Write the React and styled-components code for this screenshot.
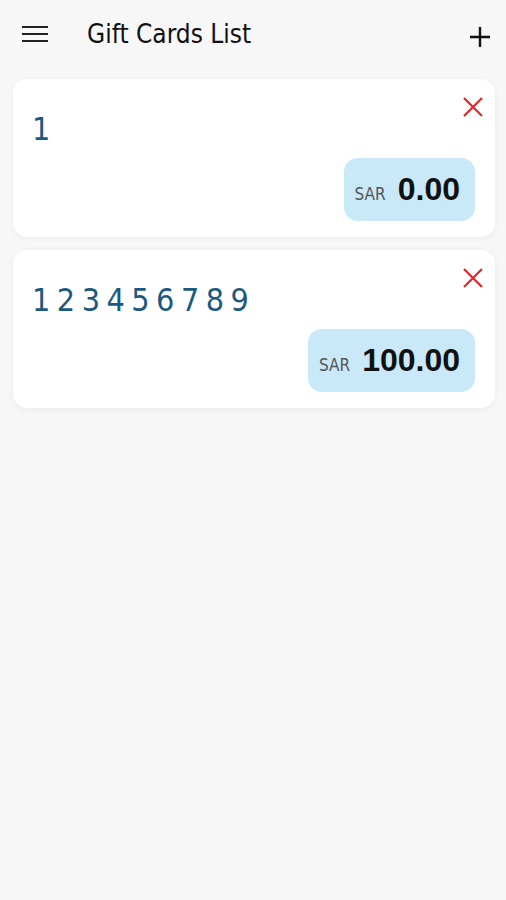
import React from 'react';
import styled, { createGlobalStyle } from 'styled-components';

const GlobalStyle = createGlobalStyle`
    html, body {
        margin: 0;
        padding: 0;
        background: #f7f7f7;
    }
    body {
        font-family: "DejaVu Sans Condensed", "DejaVu Sans", sans-serif;
    }
`;

const Page = styled.div`
    min-height: 900px;
    background: #f7f7f7;
`;

const Header = styled.div`
    height: 68px;
    display: flex;
    align-items: center;
    padding: 0 15px 0 22px;
`;

const MenuButton = styled.div`
    width: 26px;
    display: flex;
    flex-direction: column;
    gap: 5px;
    margin-right: 39px;

    span {
        display: block;
        height: 2px;
        background: #222;
    }
`;

const Title = styled.div`
    flex: 1;
    font-size: 26px;
    line-height: 30px;
    color: #111;
`;

const AddButton = styled.svg`
    width: 22px;
    height: 22px;
    margin-top: 6px;
`;

const List = styled.div`
    display: flex;
    flex-direction: column;
    gap: 13px;
    padding: 11px 11px 0 13px;
`;

const Card = styled.div`
    position: relative;
    background: #fff;
    border-radius: 14px;
    box-shadow: 0 1px 6px rgba(0, 0, 0, 0.06);
    padding: 31px 20px 16px 19px;
    display: flex;
    flex-direction: column;
    gap: 10px;
`;

const RemoveButton = styled.svg`
    position: absolute;
    top: 17px;
    right: 11px;
    width: 22px;
    height: 22px;
`;

const CardNumber = styled.div`
    font-size: 32px;
    line-height: 38px;
    letter-spacing: 6.5px;
    color: #1b5a80;
`;

const AmountRow = styled.div`
    display: flex;
    justify-content: flex-end;
`;

const Pill = styled.div`
    height: 63px;
    display: flex;
    align-items: baseline;
    justify-content: center;
    padding: 0 15px 0 11px;
    box-sizing: border-box;
    line-height: 63px;
    background: #c9e9f9;
    border-radius: 14px;
`;

const Currency = styled.span`
    font-size: 17px;
    color: #555;
    margin-right: 12px;
`;

const Amount = styled.span`
    font-family: "Liberation Sans", Arial, sans-serif;
    font-weight: 700;
    font-size: 32px;
    color: #111;
`;

const cards = [
    { number: '1', amount: '0.00' },
    { number: '123456789', amount: '100.00' },
];

const App = () => {
    return <Page>
        <GlobalStyle />
        <Header>
            <MenuButton>
                <span />
                <span />
                <span />
            </MenuButton>
            <Title>Gift Cards List</Title>
            <AddButton viewBox="0 0 22 22">
                <path d="M11 1v20M1 11h20" stroke="#111" strokeWidth="2.4" fill="none" />
            </AddButton>
        </Header>
        <List>
            {cards.map((card) => (
                <Card key={card.number}>
                    <RemoveButton viewBox="0 0 22 22">
                        <path d="M2 2l18 18M20 2L2 20" stroke="#e0282b" strokeWidth="2.2" fill="none" />
                    </RemoveButton>
                    <CardNumber>{card.number}</CardNumber>
                    <AmountRow>
                        <Pill>
                            <Currency>SAR</Currency>
                            <Amount>{card.amount}</Amount>
                        </Pill>
                    </AmountRow>
                </Card>
            ))}
        </List>
    </Page>
}

export default App
